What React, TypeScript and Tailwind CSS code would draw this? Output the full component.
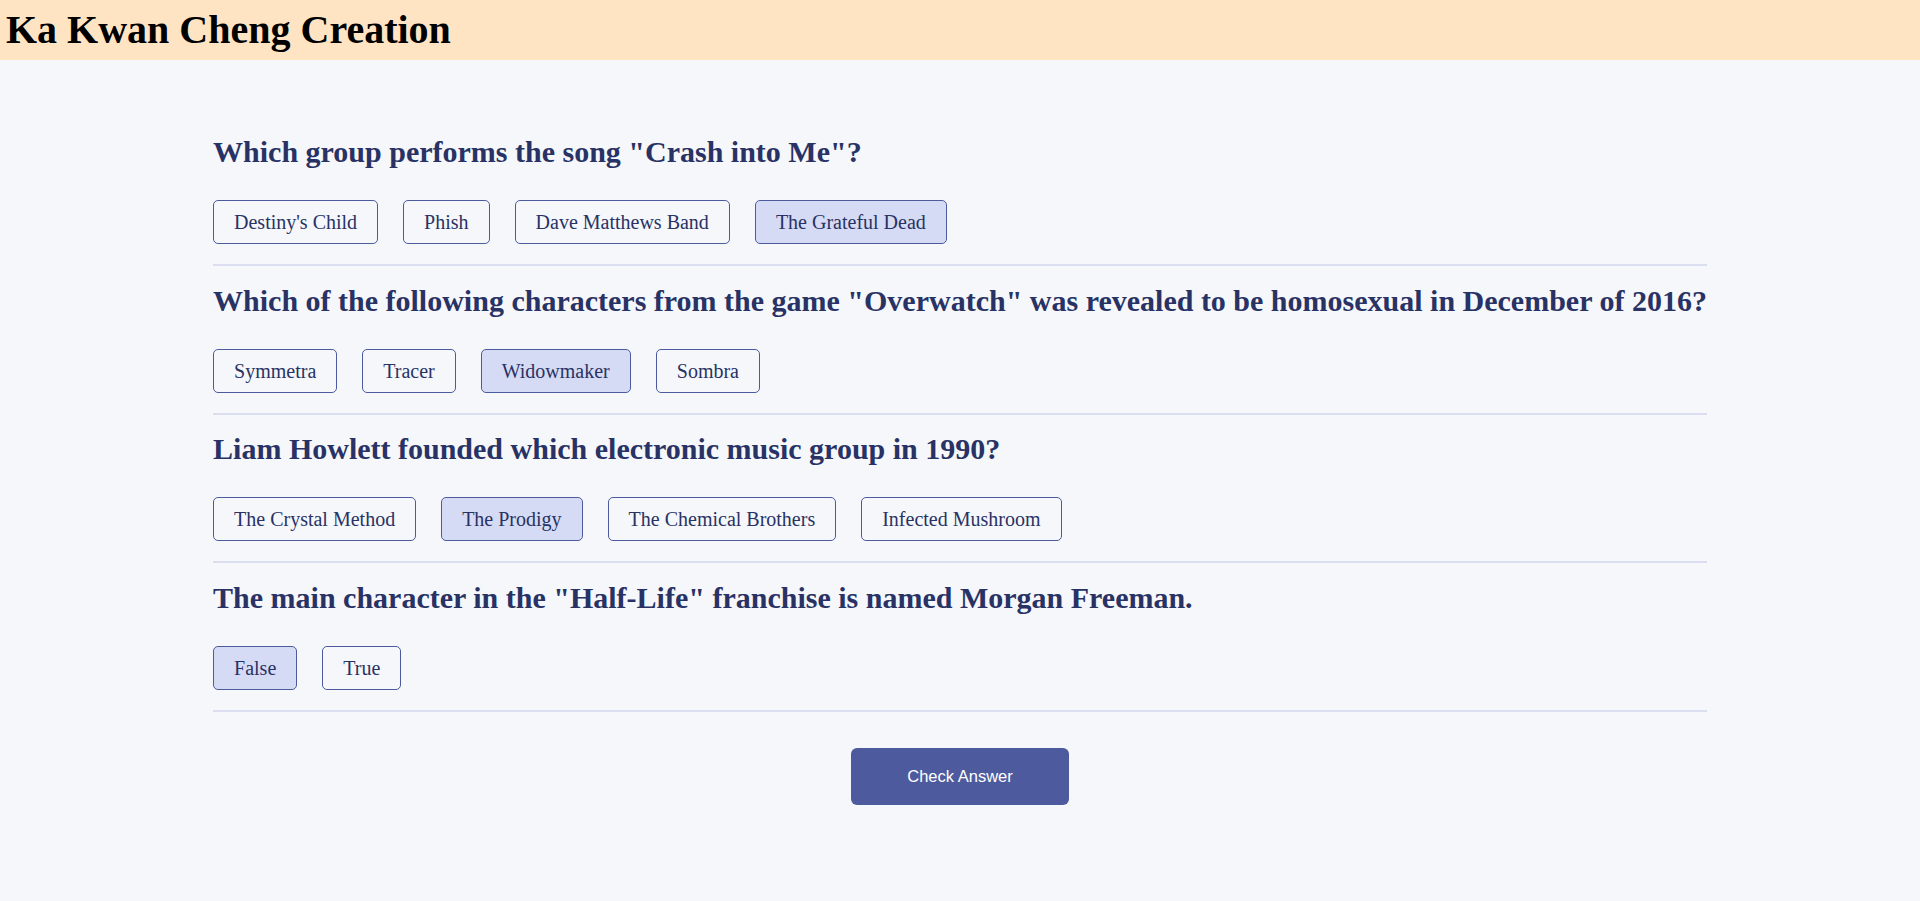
import React, { useState } from 'react';

interface Question {
  question: string;
  answers: string[];
}

const questions: Question[] = [
  {
    question: 'Which group performs the song "Crash into Me"?',
    answers: ["Destiny's Child", 'Phish', 'Dave Matthews Band', 'The Grateful Dead'],
  },
  {
    question:
      'Which of the following characters from the game "Overwatch" was revealed to be homosexual in December of 2016?',
    answers: ['Symmetra', 'Tracer', 'Widowmaker', 'Sombra'],
  },
  {
    question: 'Liam Howlett founded which electronic music group in 1990?',
    answers: ['The Crystal Method', 'The Prodigy', 'The Chemical Brothers', 'Infected Mushroom'],
  },
  {
    question: 'The main character in the "Half-Life" franchise is named Morgan Freeman.',
    answers: ['False', 'True'],
  },
];

export default function App() {
  // picked answer per question
  const [selected, setSelected] = useState<number[]>([3, 2, 1, 0]);

  const pick = (q: number, a: number) => {
    setSelected((prev) => prev.map((v, i) => (i === q ? a : v)));
  };

  return (
    <div className="min-h-screen bg-[#f5f7fb] font-['Liberation_Serif','Times_New_Roman',serif]">
      <header className="h-[60px] bg-[#ffe4c4] flex items-center pl-[6px]">
        <h1 className="text-[40px] font-bold leading-none text-black">Ka Kwan Cheng Creation</h1>
      </header>

      <main className="w-fit mx-auto pt-[75px]">
        {questions.map((q, qi) => (
          <section
            key={qi}
            className={`border-b-2 border-[#dbdef0] pb-[20px] ${qi === 0 ? '' : 'pt-[17.5px]'}`}
          >
            <h2 className="text-[30px] font-bold leading-[34px] text-[#293264] whitespace-nowrap">
              {q.question}
            </h2>
            <div className="flex gap-[25px] mt-[31px]">
              {q.answers.map((a, ai) => (
                <button
                  key={ai}
                  onClick={() => pick(qi, ai)}
                  className={`h-[44px] px-[20px] flex items-center border border-[#4d5b9e] rounded-[5px] text-[20px] text-[#293264] ${
                    selected[qi] === ai ? 'bg-[#d6dbf5]' : 'bg-transparent'
                  }`}
                >
                  {a}
                </button>
              ))}
            </div>
          </section>
        ))}

        <div className="flex justify-center mt-[36px]">
          <button className="w-[218px] h-[57px] rounded-[6px] bg-[#4d5b9e] text-white text-[16.5px] font-['Liberation_Sans',Arial,sans-serif]">
            Check Answer
          </button>
        </div>
      </main>
    </div>
  );
}
